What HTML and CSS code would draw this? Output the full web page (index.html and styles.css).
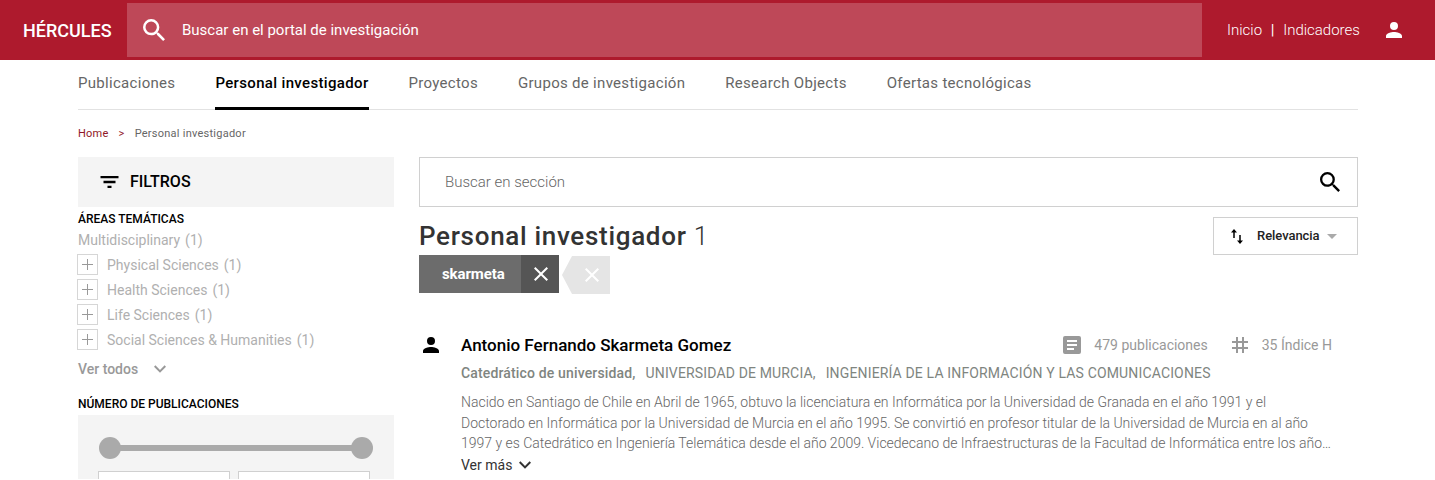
FILE: index.html
```html
<!DOCTYPE html>
<html lang="es">
<head>
<meta charset="utf-8">
<title>Personal investigador - Hércules</title>
<link rel="stylesheet" href="styles.css">
</head>
<body>
<header class="header">
  <a class="brand">HÉRCULES</a>
  <div class="portal-search">
    <svg class="portal-icon" viewBox="3 3 17.49 17.49"><path d="M15.5 14h-.79l-.28-.27A6.47 6.47 0 0 0 16 9.5 6.5 6.5 0 1 0 9.5 16c1.61 0 3.09-.59 4.23-1.57l.27.28v.79l5 4.99L20.49 19l-4.99-5zm-6 0a4.5 4.5 0 1 1 0-9 4.5 4.5 0 0 1 0 9z"/></svg>
    <span>Buscar en el portal de investigación</span>
  </div>
  <nav class="header-links"><a class="inicio">Inicio</a><span class="bar">|</span><a class="indicadores">Indicadores</a></nav>
  <svg class="user-icon" viewBox="4 4 16 16"><path d="M12 12a4 4 0 1 0 0-8 4 4 0 0 0 0 8zm0 2c-2.67 0-8 1.34-8 4v2h16v-2c0-2.66-5.33-4-8-4z"/></svg>
</header>
<div class="container">
  <nav class="tabs">
    <a class="tab">Publicaciones</a>
    <a class="tab active">Personal investigador</a>
    <a class="tab">Proyectos</a>
    <a class="tab">Grupos de investigación</a>
    <a class="tab">Research Objects</a>
    <a class="tab">Ofertas tecnológicas</a>
  </nav>
  <div class="breadcrumb"><a class="home">Home</a><span class="sep">&gt;</span><span>Personal investigador</span></div>
  <div class="columns">
    <aside class="filters">
      <div class="filters-head">
        <svg class="filter-icon" viewBox="3 6 18 12"><path d="M10 18h4v-2.300h-4zM3 6v2.300h18V6zm3 7.150h12v-2.300H6z"/></svg>
        <span>FILTROS</span>
      </div>
      <h2 class="facet-title">ÁREAS TEMÁTICAS</h2>
      <ul class="facets">
        <li class="facet"><span>Multidisciplinary</span><span>(1)</span></li>
        <li class="facet"><i class="plus"></i><span>Physical Sciences</span><span>(1)</span></li>
        <li class="facet"><i class="plus"></i><span>Health Sciences</span><span>(1)</span></li>
        <li class="facet"><i class="plus"></i><span>Life Sciences</span><span>(1)</span></li>
        <li class="facet"><i class="plus"></i><span>Social Sciences &amp; Humanities</span><span>(1)</span></li>
      </ul>
      <a class="see-all">Ver todos<svg class="chevron" viewBox="6 8.59 12 7.41"><path d="M7.41 8.59 12 13.17l4.59-4.58L18 10l-6 6-6-6z"/></svg></a>
      <h2 class="facet-title pubs">NÚMERO DE PUBLICACIONES</h2>
      <div class="range">
        <div class="slider"><i class="knob"></i><i class="track"></i><i class="knob"></i></div>
        <div class="range-inputs"><i class="range-input"></i><i class="range-input"></i></div>
      </div>
    </aside>
    <main class="results">
      <div class="section-search">
        <span>Buscar en sección</span>
        <svg class="section-icon" viewBox="3 3 17.49 17.49"><path d="M15.5 14h-.79l-.28-.27A6.47 6.47 0 0 0 16 9.5 6.5 6.5 0 1 0 9.5 16c1.61 0 3.09-.59 4.23-1.57l.27.28v.79l5 4.99L20.49 19l-4.99-5zm-6 0a4.5 4.5 0 1 1 0-9 4.5 4.5 0 0 1 0 9z"/></svg>
      </div>
      <div class="heading">
        <div>
          <h1 class="title">Personal investigador <span class="count">1</span></h1>
          <div class="tags">
            <span class="tag">skarmeta</span>
            <span class="tag-close"><svg class="cross" viewBox="5 5 14 14"><path d="M19 6.41 17.59 5 12 10.59 6.41 5 5 6.41 10.59 12 5 17.59 6.41 19 12 13.41 17.59 19 19 17.59 13.41 12z"/></svg></span>
            <span class="clear"><svg class="cross" viewBox="5 5 14 14"><path d="M19 6.41 17.59 5 12 10.59 6.41 5 5 6.41 10.59 12 5 17.59 6.41 19 12 13.41 17.59 19 19 17.59 13.41 12z"/></svg></span>
          </div>
        </div>
        <div class="sort">
          <svg class="sort-icon" viewBox="0 0 12 15"><path d="M3 0 6 3.500H3.750V9h-1.500V3.500H0zM8.250 6h1.500v5.500H12L9 15l-3-3.500h2.250z"/></svg>
          <span class="sort-label">Relevancia</span>
          <svg class="caret" viewBox="0 0 10 5"><path d="M0 0h10L5 5z"/></svg>
        </div>
      </div>
      <article class="person">
        <svg class="person-icon" viewBox="4 4 16 16"><path d="M12 12a4 4 0 1 0 0-8 4 4 0 0 0 0 8zm0 2c-2.67 0-8 1.34-8 4v2h16v-2c0-2.660-5.330-4-8-4z"/></svg>
        <div class="person-body">
          <div class="person-head">
            <h2 class="name">Antonio Fernando Skarmeta Gomez</h2>
            <div class="stats">
              <svg class="doc-icon" viewBox="3 3 18 18"><path d="M19 3H5a2 2 0 0 0-2 2v14a2 2 0 0 0 2 2h14a2 2 0 0 0 2-2V5a2 2 0 0 0-2-2zm-5 14H7v-2h7v2zm3-4H7v-2h10v2zm0-4H7V7h10v2z"/></svg>
              <span class="stat-pubs">479 publicaciones</span>
              <svg class="hash-icon" viewBox="4 4 16 16"><path d="M20 10V8h-4V4h-2v4h-4V4H8v4H4v2h4v4H4v2h4v4h2v-4h4v4h2v-4h4v-2h-4v-4h4zm-6 4h-4v-4h4v4z"/></svg>
              <span class="stat-h">35 Índice H</span>
            </div>
          </div>
          <div class="affiliation"><b class="position">Catedrático de universidad,</b><span class="univ">UNIVERSIDAD DE MURCIA,</span><span class="dept">INGENIERÍA DE LA INFORMACIÓN Y LAS COMUNICACIONES</span></div>
          <p class="bio"><span class="line">Nacido en Santiago de Chile en Abril de 1965, obtuvo la licenciatura en Informática por la Universidad de Granada en el año 1991 y el</span><span class="line">Doctorado en Informática por la Universidad de Murcia en el año 1995. Se convirtió en profesor titular de la Universidad de Murcia en al año</span><span class="line">1997 y es Catedrático en Ingeniería Telemática desde el año 2009. Vicedecano de Infraestructuras de la Facultad de Informática entre los año…</span></p>
          <a class="more">Ver más<svg class="chevron" viewBox="6 8.59 12 7.41"><path d="M7.410 8.590 12 13.170l4.590-4.580L18 10l-6 6-6-6z"/></svg></a>
        </div>
      </article>
    </main>
  </div>
</div>
</body>
</html>
```
FILE: styles.css
```css
* { box-sizing: border-box; margin: 0; padding: 0; }
html { background: #fff; }
body { font-family: Roboto, "Liberation Sans", sans-serif; font-size: 14px; color: #000; white-space: nowrap; }
svg { display: block; flex: none; fill: currentColor; }
i { display: block; }

.header { display: flex; align-items: center; height: 60px; padding-left: 23px; background: #ae1a2d; color: #fff; }
.brand { width: 104px; font-size: 18px; font-weight: 500; }
.portal-search { display: flex; align-items: center; gap: 17px; width: 1075px; height: 54px; padding-left: 16px; background: #be4858; font-size: 15px; }
.portal-icon { width: 22px; height: 22px; }
.header-links { display: flex; width: 184px; padding-left: 25px; font-size: 15px; font-weight: 300; }
.bar { width: 21px; text-align: center; font-weight: 400; }
.user-icon { width: 16px; height: 16px; }

.container { width: 1280px; margin-left: 78px; }
.tabs { display: flex; gap: 40px; height: 50px; border-bottom: 1px solid #e2e2e2; }
.tab { height: 50px; padding-top: 14px; font-size: 15px; line-height: 18px; letter-spacing: 0.3px; color: #666; }
.tab.active { border-bottom: 3px solid #000; color: #000; font-weight: 500; letter-spacing: 0.34px; }
.breadcrumb { display: flex; gap: 10px; height: 47px; padding-top: 17px; font-size: 11px; line-height: 14px; letter-spacing: 0.25px; color: #666; }
.home, .sep { color: #8f1626; }
.columns { display: grid; grid-template-columns: 316px 939px; gap: 25px; }

.filters-head { display: flex; align-items: center; gap: 11px; height: 50px; padding: 0 0 1px 22px; background: #f4f4f4; font-size: 16px; font-weight: 500; }
.filter-icon { width: 19px; height: 12px; margin-top: 1px; }
.facet-title { padding-top: 4px; font-size: 12px; line-height: 16px; font-weight: 500; }
.facets { display: grid; grid-auto-rows: 25px; list-style: none; color: #b0b0b0; }
.facet { display: flex; align-items: center; gap: 5px; }
.plus { width: 21px; height: 21px; margin: 0 4px 0 -1px; border: 1px solid #d6d6d6; background: linear-gradient(#999, #999) center / 11px 1px no-repeat, linear-gradient(#999, #999) center / 1px 11px no-repeat; }
.see-all { display: flex; align-items: center; gap: 16px; height: 16px; margin-top: 9px; font-weight: 500; color: #999; }
.chevron { width: 12px; height: 8px; }
.pubs { margin-top: 15px; }
.range { margin-top: 3px; height: 64px; padding: 22px 20px 0; background: #f4f4f4; overflow: hidden; }
.slider { display: flex; align-items: center; width: 276px; padding-left: 1px; }
.knob { width: 22px; height: 22px; border-radius: 50%; background: #aaa; }
.track { width: 232px; height: 6px; margin: 0 -1px; background: #aaa; }
.range-inputs { display: flex; gap: 8px; margin-top: 12px; }
.range-input { width: 132px; height: 9px; border: 1px solid #d0d0d0; border-bottom: 0; background: #fff; }

.section-search { display: flex; align-items: center; justify-content: space-between; height: 50px; padding: 0 17px 0 25px; border: 1px solid #d0d0d0; font-size: 15px; font-weight: 300; color: #666; }
.section-icon { width: 20px; height: 20px; color: #000; }
.heading { display: flex; justify-content: space-between; align-items: flex-start; padding-top: 10px; }
.title { height: 38px; font-size: 26px; line-height: 38px; font-weight: 500; letter-spacing: 0.69px; color: #333; }
.count { font-weight: 300; }
.tags { display: flex; height: 39px; color: #fff; }
.tag { width: 102px; height: 38px; padding-left: 23px; background: #6c6c6c; font-size: 15px; line-height: 38px; font-weight: 700; letter-spacing: -0.1px; }
.tag-close { display: grid; place-items: center; width: 38px; height: 38px; padding-left: 1px; background: #555; }
.cross { width: 14px; height: 14px; }
.clear { display: grid; place-items: center; width: 48px; height: 38px; margin: 1px 0 0 3px; padding-left: 11px; background: #e5e5e5; clip-path: polygon(0 50%, 10px 0, 100% 0, 100% 100%, 10px 100%); }
.sort { display: flex; align-items: center; width: 145px; height: 38px; padding-left: 17px; border: 1px solid #d0d0d0; font-size: 13px; }
.sort-icon { width: 12px; height: 15px; }
.sort-label { margin: 0 7px 2px 14px; font-weight: 500; letter-spacing: -0.05px; color: #222; }
.caret { width: 10px; height: 5px; color: #aaa; }

.person { display: flex; gap: 22px; padding: 41px 0 0 4px; }
.person-icon { width: 16px; height: 16px; margin-top: 2px; }
.person-body { width: 871px; }
.person-head { display: flex; justify-content: space-between; align-items: center; height: 20px; }
.name { font-size: 17px; line-height: 20px; font-weight: 500; }
.stats { display: flex; align-items: center; color: #999; }
.doc-icon { width: 18px; height: 18px; margin-right: 13px; }
.hash-icon { width: 16px; height: 16px; margin: 0 14px 0 24px; }
.affiliation { display: flex; gap: 10px; margin-top: 10px; line-height: 16px; letter-spacing: 0.15px; color: #80857f; }
.position { font-weight: 500; }
.bio { margin-top: 11px; font-size: 14px; line-height: 20.5px; font-weight: 300; letter-spacing: -0.013px; color: #666; }
.line { display: block; }
.more { display: flex; align-items: center; gap: 7px; height: 16px; margin-top: 3px; color: #333; }
```
